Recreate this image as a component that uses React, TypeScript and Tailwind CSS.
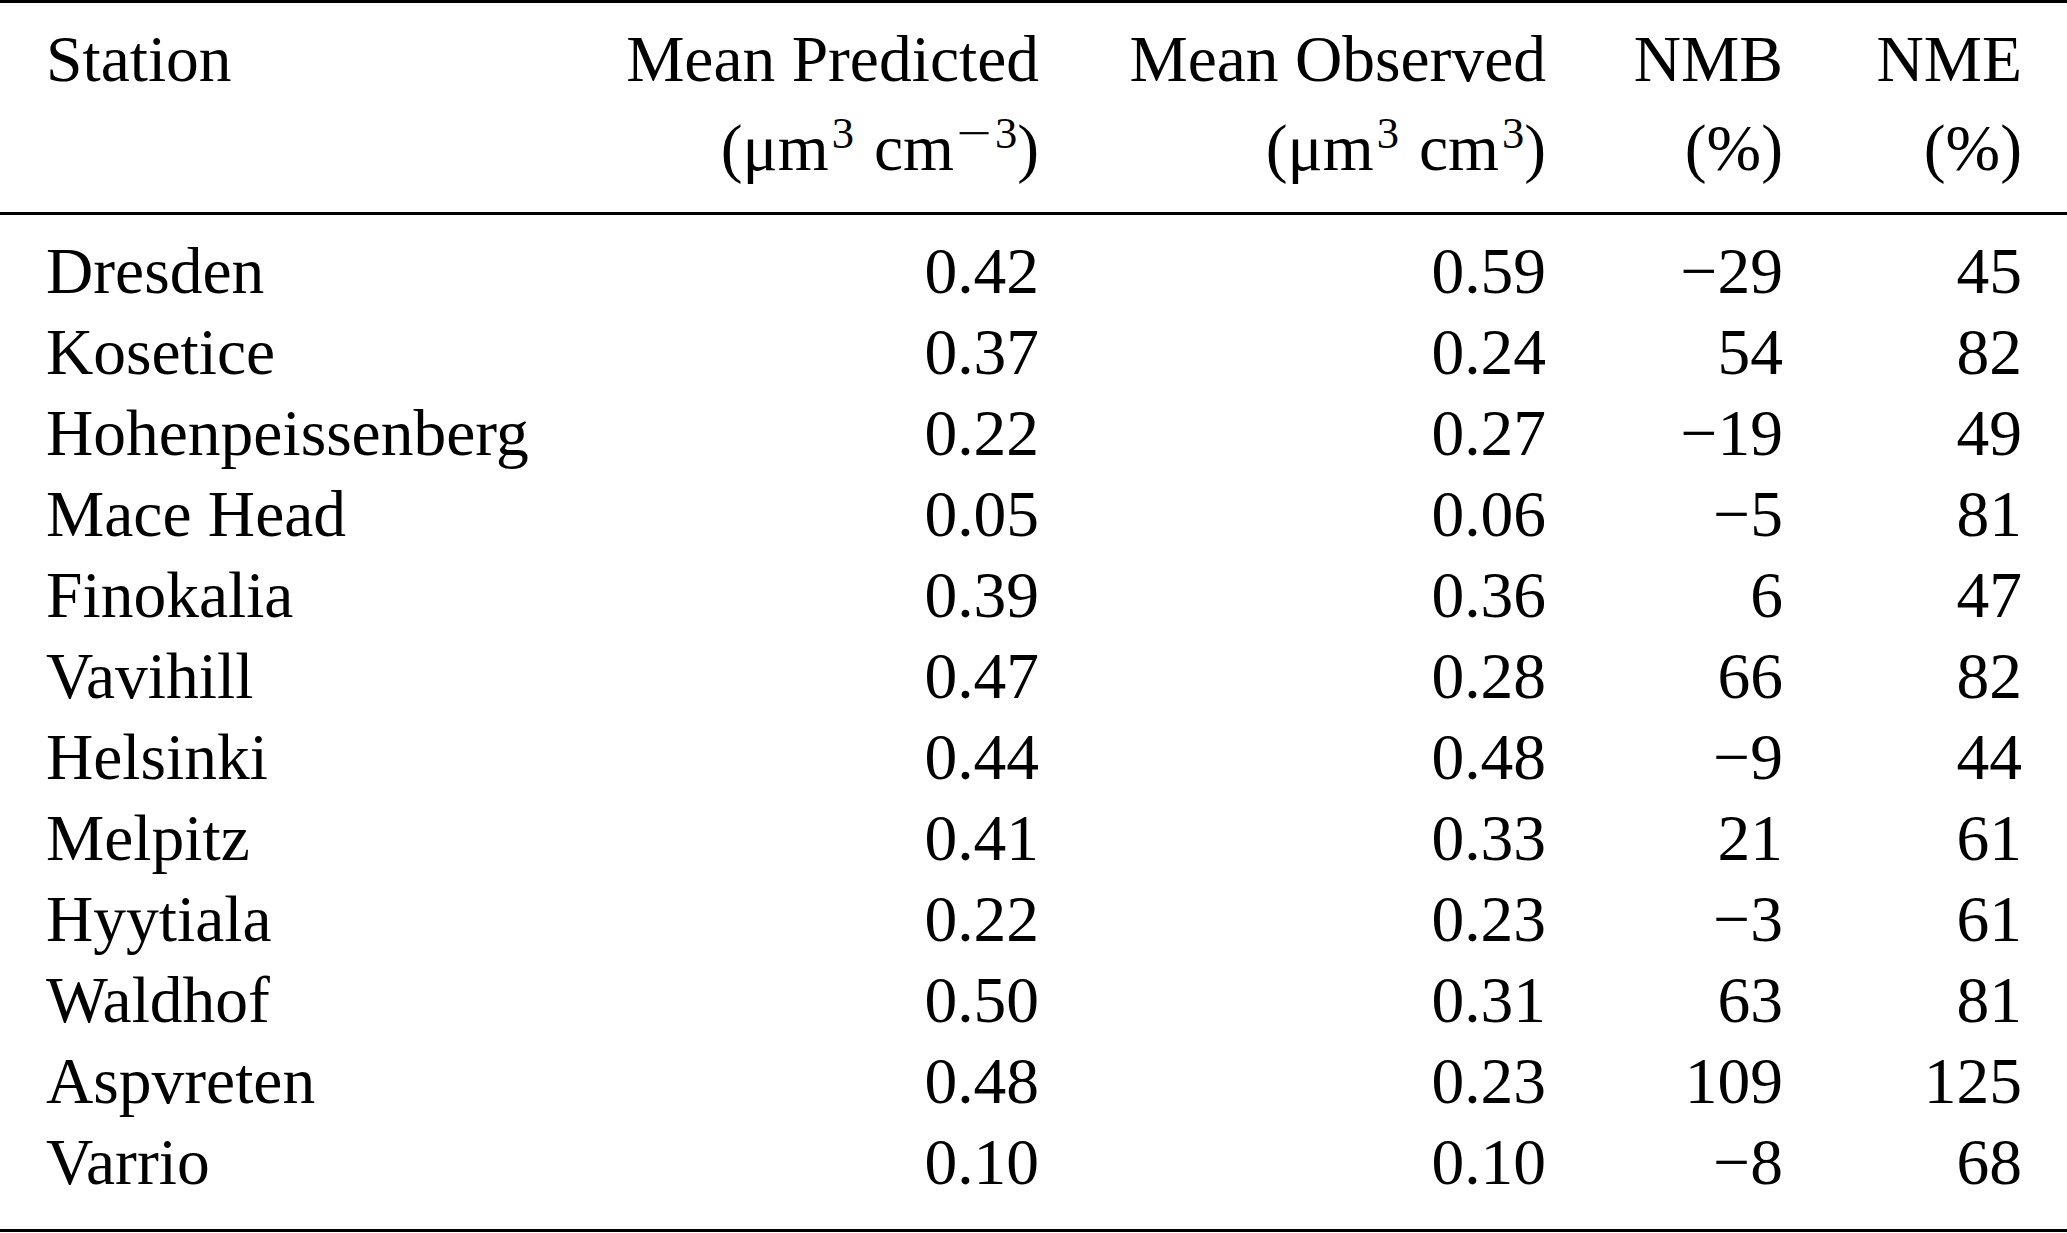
import React from 'react';

type Row = {
    station: string;
    predicted: string;
    observed: string;
    nmb: string;
    nme: string;
};

const rows: Row[] = [
    { station: 'Dresden', predicted: '0.42', observed: '0.59', nmb: '−29', nme: '45' },
    { station: 'Kosetice', predicted: '0.37', observed: '0.24', nmb: '54', nme: '82' },
    { station: 'Hohenpeissenberg', predicted: '0.22', observed: '0.27', nmb: '−19', nme: '49' },
    { station: 'Mace Head', predicted: '0.05', observed: '0.06', nmb: '−5', nme: '81' },
    { station: 'Finokalia', predicted: '0.39', observed: '0.36', nmb: '6', nme: '47' },
    { station: 'Vavihill', predicted: '0.47', observed: '0.28', nmb: '66', nme: '82' },
    { station: 'Helsinki', predicted: '0.44', observed: '0.48', nmb: '−9', nme: '44' },
    { station: 'Melpitz', predicted: '0.41', observed: '0.33', nmb: '21', nme: '61' },
    { station: 'Hyytiala', predicted: '0.22', observed: '0.23', nmb: '−3', nme: '61' },
    { station: 'Waldhof', predicted: '0.50', observed: '0.31', nmb: '63', nme: '81' },
    { station: 'Aspvreten', predicted: '0.48', observed: '0.23', nmb: '109', nme: '125' },
    { station: 'Varrio', predicted: '0.10', observed: '0.10', nmb: '−8', nme: '68' },
];

const cols = 'grid grid-cols-[494px_499px_507px_237px_239px] pl-[46px] pr-[45px]';

// unit label like (μm³ cm⁻³)
const Unit = ({ negative }: { negative?: boolean }) => (
    <span>
        (μm<sup className="text-[0.68em] ml-[3px]">3</sup>
        <span className="ml-[20px]">cm</span>
        <sup className="text-[0.68em] ml-[3px]">
            {negative && (
                <span className="inline-block w-[34px] mr-[4px] text-center scale-x-[1.4]">−</span>
            )}
            3
        </sup>
        )
    </span>
);

const App = () => {
    return (
        <div
            className="w-[2067px] bg-white text-black text-[65.5px]"
            style={{ fontFamily: '"Liberation Serif", "Times New Roman", serif' }}
        >
            {/* header */}
            <div className="border-t-[3px] border-black pt-[12px] pb-[19px]">
                <div className={`${cols} leading-[89px]`}>
                    <div className="text-left">Station</div>
                    <div className="text-right">
                        <div>Mean Predicted</div>
                        <div>
                            <Unit negative />
                        </div>
                    </div>
                    <div className="text-right">
                        <div>Mean Observed</div>
                        <div>
                            <Unit />
                        </div>
                    </div>
                    <div className="text-right">
                        <div>NMB</div>
                        <div>(%)</div>
                    </div>
                    <div className="text-right">
                        <div>NME</div>
                        <div>(%)</div>
                    </div>
                </div>
            </div>

            {/* body */}
            <div className="border-t-[3px] border-black pt-[15.5px] pb-[26.5px] border-b-[3px]">
                {rows.map((r) => (
                    <div key={r.station} className={`${cols} leading-[81px]`}>
                        <div className="text-left">{r.station}</div>
                        <div className="text-right">{r.predicted}</div>
                        <div className="text-right">{r.observed}</div>
                        <div className="text-right">{r.nmb}</div>
                        <div className="text-right">{r.nme}</div>
                    </div>
                ))}
            </div>
        </div>
    );
};

export default App;
